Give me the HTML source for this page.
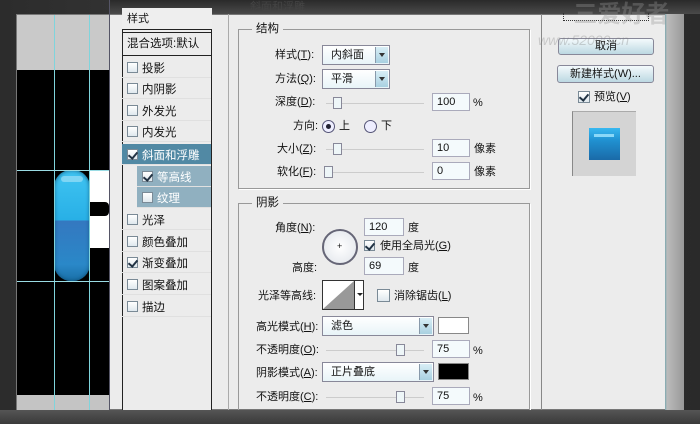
<!DOCTYPE html><html><head><meta charset="utf-8"><style>
*{margin:0;padding:0;box-sizing:border-box}
body{width:700px;height:424px;overflow:hidden;position:relative;background:linear-gradient(90deg,#2c2c2c,#3e3e3e 50%,#2a2a2a);font-family:"Liberation Sans","Noto Sans CJK SC",sans-serif;font-size:11px;color:#111}
.a{position:absolute}
.t{position:absolute;white-space:nowrap;line-height:14px}
.cb{position:absolute;width:11px;height:11px;border:1px solid #7a8a96;background:linear-gradient(#fff,#dfe8ee)}
.cb.on::after{content:"";position:absolute;left:2px;top:0px;width:4px;height:7px;border:solid #234;border-width:0 2px 2px 0;transform:rotate(40deg)}
.inp{position:absolute;height:18px;border:1px solid #aab;background:#f4fafc;padding-left:4px;line-height:16px}
.sel{position:absolute;height:20px;border:1px solid #889;background:linear-gradient(#fff,#e8f4f8);padding-left:8px;line-height:18px}
.sel i{position:absolute;right:1px;top:1px;width:13px;height:16px;background:linear-gradient(#d8eef6,#a8d0e0);border-left:1px solid #89a}
.sel i::after{content:"";position:absolute;left:3px;top:6px;border:3px solid transparent;border-top:4px solid #333}
.sl{position:absolute;height:1px;background:#555;border-bottom:1px solid #ccc}
.kn{position:absolute;width:9px;height:12px;border:1px solid #889;background:#eef6f8;top:-6px}
.gb{position:absolute;border:1px solid #999;box-shadow:1px 1px 0 #fff}
.li{position:absolute;left:122px;width:89px;height:21px;border-bottom:1px solid #e0e0e0}
.li .cb{left:5px;top:5px}
.li span{position:absolute;left:20px;top:3px;font-size:11.5px}
</style></head><body>
<div class="a" style="left:16px;top:14px;width:668px;height:396px;background:#ececec;border:1px solid #777"></div>
<div class="a" style="left:17px;top:15px;width:92px;height:55px;background:#c9c9c9"></div>
<div class="a" style="left:17px;top:70px;width:92px;height:325px;background:#000"></div>
<div class="a" style="left:17px;top:395px;width:92px;height:15px;background:#c4c4c4"></div>
<div class="a" style="left:89px;top:170px;width:20px;height:78px;background:#fff"></div>
<div class="a" style="left:89px;top:202px;width:20px;height:14px;background:#000;border-radius:0 4px 4px 0"></div>
<div class="a" style="left:54px;top:170px;width:36px;height:111px;border-radius:17px;background:linear-gradient(#40c4f2,#28b0e6 45%,#3478c0 46%,#2a88c8 85%,#1a70a8);box-shadow:inset 0 0 4px #0b4b70"></div>
<div class="a" style="left:61px;top:176px;width:22px;height:6px;border-radius:4px;background:rgba(255,255,255,.35)"></div>
<div class="a" style="left:54px;top:15px;width:1px;height:395px;background:#7fd4dc"></div>
<div class="a" style="left:89px;top:15px;width:1px;height:395px;background:#7fd4dc"></div>
<div class="a" style="left:17px;top:170px;width:92px;height:1px;background:#9adce4"></div>
<div class="a" style="left:17px;top:281px;width:92px;height:1px;background:#9adce4"></div>
<div class="a" style="left:109px;top:0;width:1px;height:424px;background:#556"></div>
<div class="a" style="left:110px;top:0;width:590px;height:14px;background:linear-gradient(#2a2a2a,#4a4a4a)"></div>
<div class="t" style="left:250px;top:0;color:#444;font-size:11px">斜面和浮雕</div>
<div class="a" style="left:122px;top:8px;width:90px;height:402px;border-left:1px solid #222;border-right:1px solid #222;background:#ececec"></div>
<div class="a" style="left:122px;top:8px;width:90px;height:22px;border-bottom:1px solid #222;background:#eee"></div>
<div class="t" style="left:127px;top:12px">样式</div>
<div class="a" style="left:122px;top:32px;width:90px;height:24px;border-top:1px solid #222;border-bottom:1px solid #222"></div>
<div class="t" style="left:127px;top:37px;font-size:11.5px">混合选项:默认</div>
<div class="li" style="top:57px"><div class="cb"></div><span>投影</span></div>
<div class="li" style="top:78px"><div class="cb"></div><span>内阴影</span></div>
<div class="li" style="top:100px"><div class="cb"></div><span>外发光</span></div>
<div class="li" style="top:121px"><div class="cb"></div><span>内发光</span></div>
<div class="li" style="top:144px;background:#5189a4;color:#fff"><div class="cb on"></div><span>斜面和浮雕</span></div>
<div class="li" style="top:166px;left:137px;width:74px;background:#90b0c0;color:#fff"><div class="cb on"></div><span>等高线</span></div>
<div class="li" style="top:187px;left:137px;width:74px;background:#90b0c0;color:#fff"><div class="cb"></div><span>纹理</span></div>
<div class="li" style="top:209px"><div class="cb"></div><span>光泽</span></div>
<div class="li" style="top:231px"><div class="cb"></div><span>颜色叠加</span></div>
<div class="li" style="top:252px"><div class="cb on"></div><span>渐变叠加</span></div>
<div class="li" style="top:274px"><div class="cb"></div><span>图案叠加</span></div>
<div class="li" style="top:296px"><div class="cb"></div><span>描边</span></div>
<div class="a" style="left:228px;top:14px;width:1px;height:396px;background:#aaa"></div>
<div class="gb" style="left:238px;top:29px;width:292px;height:160px"></div>
<div class="t" style="left:252px;top:22px;background:#ececec;padding:0 4px;font-size:11.5px">结构</div>
<div class="t" style="left:275px;top:48px">样式(<u>T</u>):</div>
<div class="sel" style="left:322px;top:45px;width:68px">内斜面<i></i></div>
<div class="t" style="left:275px;top:72px">方法(<u>Q</u>):</div>
<div class="sel" style="left:322px;top:69px;width:68px">平滑<i></i></div>
<div class="t" style="left:275px;top:95px">深度(<u>D</u>):</div>
<div class="sl" style="left:326px;top:103px;width:98px"><div class="kn" style="left:7px"></div></div>
<div class="inp" style="left:432px;top:93px;width:38px">100</div><div class="t" style="left:473px;top:96px">%</div>
<div class="t" style="left:293px;top:119px">方向:</div>
<div class="a" style="left:322px;top:120px;width:13px;height:13px;border:1px solid #557;border-radius:50%;background:#eef"><div class="a" style="left:3px;top:3px;width:5px;height:5px;border-radius:50%;background:#223"></div></div>
<div class="t" style="left:339px;top:119px">上</div>
<div class="a" style="left:364px;top:120px;width:13px;height:13px;border:1px solid #557;border-radius:50%;background:#eef"></div>
<div class="t" style="left:381px;top:119px">下</div>
<div class="t" style="left:277px;top:142px">大小(<u>Z</u>):</div>
<div class="sl" style="left:326px;top:149px;width:98px"><div class="kn" style="left:7px"></div></div>
<div class="inp" style="left:432px;top:139px;width:38px">10</div><div class="t" style="left:474px;top:142px">像素</div>
<div class="t" style="left:277px;top:165px">软化(<u>F</u>):</div>
<div class="sl" style="left:324px;top:172px;width:100px"><div class="kn" style="left:0"></div></div>
<div class="inp" style="left:432px;top:162px;width:38px">0</div><div class="t" style="left:474px;top:165px">像素</div>
<div class="gb" style="left:238px;top:203px;width:292px;height:215px"></div>
<div class="t" style="left:252px;top:196px;background:#ececec;padding:0 4px;font-size:11.5px">阴影</div>
<div class="t" style="left:275px;top:221px">角度(<u>N</u>):</div>
<div class="a" style="left:322px;top:229px;width:36px;height:36px;border:2px solid #667;border-radius:50%;background:radial-gradient(#fff,#e0e4ea)"></div>
<div class="t" style="left:337px;top:239px;font-size:9px">+</div>
<div class="inp" style="left:364px;top:218px;width:40px">120</div><div class="t" style="left:408px;top:221px">度</div>
<div class="cb on" style="left:364px;top:240px"></div>
<div class="t" style="left:380px;top:239px">使用全局光(<u>G</u>)</div>
<div class="t" style="left:292px;top:261px">高度:</div>
<div class="inp" style="left:364px;top:257px;width:40px">69</div><div class="t" style="left:408px;top:261px">度</div>
<div class="t" style="left:258px;top:289px">光泽等高线:</div>
<div class="a" style="left:322px;top:280px;width:42px;height:30px;border:1px solid #333;background:#fff;overflow:hidden">
<svg width="31" height="28" class="a" style="left:0;top:0"><polygon points="0,28 31,0 31,28" fill="#999"/></svg>
<div class="a" style="left:31px;top:0;width:1px;height:30px;background:#333"></div>
<div class="a" style="left:34px;top:12px;border:3px solid transparent;border-top:3px solid #222"></div></div>
<div class="cb" style="left:377px;top:289px;width:13px;height:13px"></div>
<div class="t" style="left:394px;top:289px">消除锯齿(<u>L</u>)</div>
<div class="t" style="left:256px;top:320px">高光模式(<u>H</u>):</div>
<div class="sel" style="left:322px;top:316px;width:112px">滤色<i></i></div>
<div class="a" style="left:438px;top:317px;width:31px;height:17px;border:1px solid #888;background:#fff"></div>
<div class="t" style="left:256px;top:343px">不透明度(<u>O</u>):</div>
<div class="sl" style="left:326px;top:350px;width:98px"><div class="kn" style="left:70px"></div></div>
<div class="inp" style="left:432px;top:340px;width:38px">75</div><div class="t" style="left:473px;top:344px">%</div>
<div class="t" style="left:256px;top:366px">阴影模式(<u>A</u>):</div>
<div class="sel" style="left:322px;top:362px;width:112px">正片叠底<i></i></div>
<div class="a" style="left:438px;top:363px;width:31px;height:17px;border:1px solid #888;background:#000"></div>
<div class="t" style="left:256px;top:390px">不透明度(<u>C</u>):</div>
<div class="sl" style="left:326px;top:397px;width:98px"><div class="kn" style="left:70px"></div></div>
<div class="inp" style="left:432px;top:387px;width:38px">75</div><div class="t" style="left:473px;top:391px">%</div>
<div class="a" style="left:541px;top:14px;width:1px;height:396px;background:#888"></div>
<div class="a" style="left:665px;top:14px;width:19px;height:396px;background:linear-gradient(90deg,#7aa8b0 0,#bbb 2px,#999)"></div>
<div class="a" style="left:563px;top:13px;width:86px;height:8px;border:1px dotted #333;border-top:none"></div>
<div class="a" style="left:558px;top:38px;width:96px;height:17px;border:1px solid #889;border-radius:3px;background:linear-gradient(#f4fafc,#bcd8e2);text-align:center;line-height:15px">取消</div>
<div class="a" style="left:557px;top:65px;width:97px;height:18px;border:1px solid #889;border-radius:3px;background:linear-gradient(#f4fafc,#bcd8e2);text-align:center;line-height:16px">新建样式(W)...</div>
<div class="cb on" style="left:578px;top:91px;width:12px;height:12px"></div>
<div class="t" style="left:594px;top:90px">预览(<u>V</u>)</div>
<div class="a" style="left:572px;top:111px;width:64px;height:65px;background:#d4d4d4;border-left:1px solid #888;border-top:1px solid #aaa"></div>
<div class="a" style="left:589px;top:128px;width:31px;height:32px;background:linear-gradient(#38b8f0,#2090d0 40%,#1a6aa8)"></div>
<div class="a" style="left:594px;top:134px;width:20px;height:3px;background:#8ad8f8"></div>
<div class="t" style="left:540px;top:2px;font-size:24px;line-height:26px;color:rgba(150,150,150,.35);font-weight:bold">&nbsp;&nbsp;&nbsp;&nbsp;&nbsp;三爱好者</div>
<div class="t" style="left:538px;top:33px;font-size:14px;color:rgba(120,120,120,.3);font-style:italic">www.52000.cn</div>
<div class="a" style="left:0;top:410px;width:700px;height:14px;background:linear-gradient(#555,#3a3a3a)"></div>
</body></html>
